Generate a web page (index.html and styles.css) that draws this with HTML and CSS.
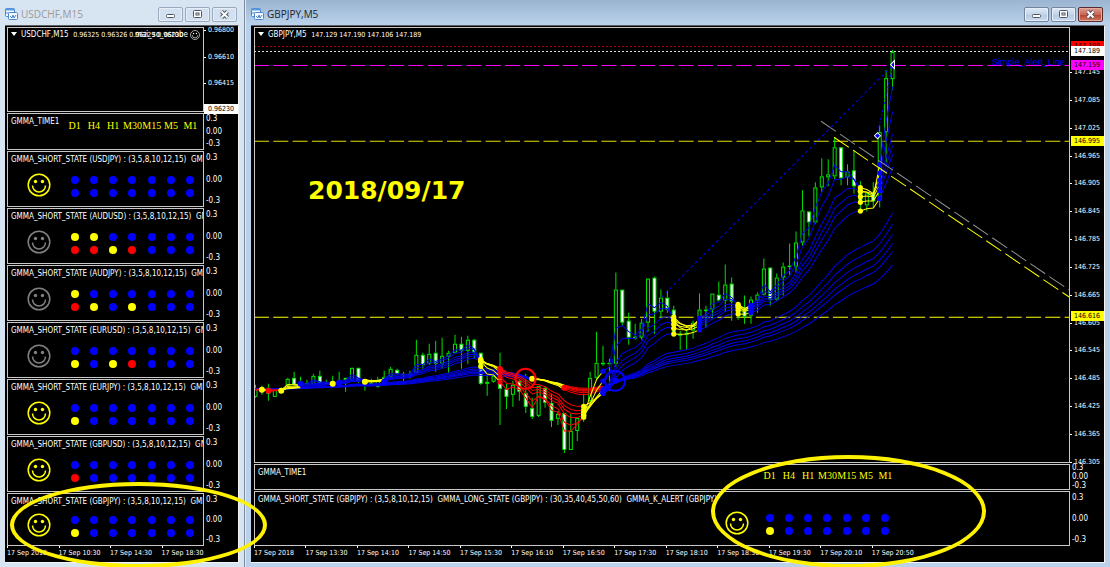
FILE: index.html
```html
<!DOCTYPE html>
<html lang="en">
<head>
    <meta charset="UTF-8">
    <meta name="viewport" content="width=device-width, initial-scale=1.0">
    <title>GBPJPY,M5</title>
    <link rel="stylesheet" href="styles.css">
</head>
<body>
    <svg class="defs" width="0" height="0">
        <symbol id="icon-chart" viewBox="0 0 13 12">
            <rect x="0.5" y="0.5" width="9" height="8" rx="1" fill="#f4f9ff" stroke="#4a86cf"/>
            <rect x="0.5" y="0.5" width="9" height="2" fill="#5b9be0"/>
            <path d="M2 6V4M4 7V4M6 6V4" stroke="#4a86cf"/>
            <rect x="3.5" y="4.5" width="9" height="7" rx="1" fill="#f4f9ff" stroke="#4a86cf"/>
            <path d="M5 8l2 2 1-3 1 3 2-3" fill="none" stroke="#4a86cf"/>
        </symbol>
        <symbol id="icon-min" viewBox="0 0 25 15">
            <rect x="8.5" y="7.5" width="8" height="3" rx="1" fill="#fff" stroke="#4d5562"/>
        </symbol>
        <symbol id="icon-max" viewBox="0 0 25 15">
            <rect x="8.5" y="3.5" width="8" height="7" rx="1" fill="#fff" stroke="#4d5562"/>
            <rect x="11" y="6" width="3" height="2" fill="#fff" stroke="#4d5562"/>
        </symbol>
        <symbol id="icon-close" viewBox="0 0 25 15">
            <path d="M9.5 4.5l6 6M15.5 4.5l-6 6" stroke="#4d5562" stroke-width="4"/>
            <path d="M9.5 4.5l6 6M15.5 4.5l-6 6" stroke="#fff" stroke-width="2"/>
        </symbol>
        <symbol id="icon-smile" viewBox="0 0 24 24">
            <circle cx="12" cy="12" r="10.8" fill="none" stroke="currentColor" stroke-width="1.5"/>
            <circle cx="8.5" cy="8.5" r="1.7" fill="currentColor"/>
            <circle cx="15.5" cy="8.5" r="1.7" fill="currentColor"/>
            <path d="M5.5 12.5a6.5 6.5 0 0 0 13 0" fill="none" stroke="currentColor" stroke-width="1.5"/>
        </symbol>
    </svg>

    <main class="desktop">
        <section class="window window-left">
            <header class="titlebar">
                <svg class="app-icon"><use href="#icon-chart"/></svg>
                <h1>USDCHF,M15</h1>
                <button type="button" aria-label="Minimize"><svg><use href="#icon-min"/></svg></button>
                <button type="button" aria-label="Maximize"><svg><use href="#icon-max"/></svg></button>
                <button type="button" aria-label="Close"><svg><use href="#icon-close"/></svg></button>
            </header>
            <div class="client">
                <div class="row row-price">
                    <div class="plot">
                        <p class="caption"><i class="arrow"></i>USDCHF,M15  <span class="quote">0.96325 0.96326 0.96229 0.96230</span></p>
                        <p class="expert">mai_so_osrobe <svg><use href="#icon-smile"/></svg></p>
                    </div>
                    <div class="axis prices">
                        <span>0.96800</span><span>0.96610</span><span>0.96415</span><span class="tag">0.96230</span>
                    </div>
                </div>
                <div class="row row-time">
                    <div class="plot">
                        <p class="caption">GMMA_TIME1</p>
                        <div class="frames"><span>D1</span><span>H4</span><span>H1</span><span>M30</span><span>M15</span><span>M5</span><span>M1</span></div>
                    </div>
                    <div class="axis"><span>0.3</span><span>0.00</span><span>-0.3</span></div>
                </div>
                <div class="states" id="states"></div>
                <div class="times"><span>17 Sep 2018</span><span>17 Sep 10:30</span><span>17 Sep 14:30</span><span>17 Sep 18:30</span></div>
            </div>
        </section>

        <section class="window window-right">
            <header class="titlebar">
                <svg class="app-icon"><use href="#icon-chart"/></svg>
                <h1>GBPJPY,M5</h1>
                <button type="button" aria-label="Minimize"><svg><use href="#icon-min"/></svg></button>
                <button type="button" aria-label="Maximize"><svg><use href="#icon-max"/></svg></button>
                <button type="button" class="close" aria-label="Close"><svg><use href="#icon-close"/></svg></button>
            </header>
            <div class="client">
                <div class="row row-chart">
                    <div class="plot">
                        <svg class="chart" id="chart" viewBox="254 27 816 435" preserveAspectRatio="none"></svg>
                        <p class="caption"><i class="arrow"></i>GBPJPY,M5  <span class="quote">147.129 147.190 147.106 147.189</span></p>
                        <p class="alert-line">Simple_Alert_Line</p>
                        <p class="date">2018/09/17</p>
                    </div>
                    <div class="axis prices">
                        <span>147.145</span><span>147.085</span><span>147.025</span><span>146.965</span><span>146.905</span><span>146.845</span><span>146.785</span><span>146.725</span><span>146.665</span><span>146.605</span><span>146.545</span><span>146.485</span><span>146.425</span><span>146.365</span><span>146.305</span>
                        <b class="mark mark-ask">147.199</b>
                        <b class="mark mark-alert">147.159</b>
                        <b class="mark mark-bid">147.189</b>
                        <b class="mark mark-high">146.995</b>
                        <b class="mark mark-low">146.616</b>
                    </div>
                </div>
                <div class="row row-time">
                    <div class="plot">
                        <p class="caption">GMMA_TIME1</p>
                        <div class="frames"><span>D1</span><span>H4</span><span>H1</span><span>M30</span><span>M15</span><span>M5</span><span>M1</span></div>
                    </div>
                    <div class="axis"><span>0.3</span><span>0.00</span><span>-0.3</span></div>
                </div>
                <div class="states" id="stateMain"></div>
                <div class="times"><span>17 Sep 2018</span><span>17 Sep 13:30</span><span>17 Sep 14:10</span><span>17 Sep 14:50</span><span>17 Sep 15:30</span><span>17 Sep 16:10</span><span>17 Sep 16:50</span><span>17 Sep 17:30</span><span>17 Sep 18:10</span><span>17 Sep 18:50</span><span>17 Sep 19:30</span><span>17 Sep 20:10</span><span>17 Sep 20:50</span></div>
            </div>
            <div class="ring ring-right"></div>
        </section>
        <div class="ring ring-left"></div>
    </main>
    <script src="chart.js"></script>
</body>
</html>
```
FILE: styles.css
```css
* {
    box-sizing: border-box;
}
body {
    margin: 0;
    background: #b9d1ea;
    color: #fff;
    font-family: "DejaVu Sans Condensed", "DejaVu Sans", sans-serif;
    font-size: 8px;
    line-height: 12px;
}
h1, p {
    margin: 0;
    font-weight: normal;
}
.defs {
    position: absolute;
}
.desktop {
    position: relative;
    display: flex;
    min-height: 100vh;
    overflow: hidden;
}
.window {
    display: flex;
    flex-direction: column;
    padding: 0 5px 5px;
}
.window-left {
    width: 245px;
    flex: none;
    background: #d7e4f2;
    border-right: 1px solid #7d8a9a;
}
.window-right {
    position: relative;
    flex: 1;
    min-width: 0;
    background: linear-gradient(#9ab4d1, #b9d1ea 24px);
    border-left: 1px solid #dfeaf6;
}

/* title bar */
.titlebar {
    display: flex;
    align-items: center;
    gap: 2px;
    height: 25px;
    padding: 3px 2px 0 0;
}
.titlebar h1 {
    flex: 1;
    margin-left: 1px;
    color: #20242c;
    font-family: "Open Sans", sans-serif;
    font-size: 10px;
}
.window-left .titlebar h1 {
    color: #9a9a9a;
}
.app-icon {
    width: 13px;
    height: 12px;
}
.titlebar button {
    width: 25px;
    height: 15px;
    padding: 0;
    border: 1px solid #72839b;
    border-radius: 2px;
    background: linear-gradient(#dfe9f5, #c3d4e8 50%, #b4c8df 51%, #cbdcee);
    box-shadow: inset 0 0 0 1px #e6eff9;
}
.window-left .titlebar button {
    border-color: #9aa9bd;
    background: #d3e0ef;
}
.titlebar button.close {
    border-color: #5b2a2c;
    background: linear-gradient(#dc9c90, #ca6753 50%, #b4402a 51%, #cf7a63);
    box-shadow: inset 0 0 0 1px #e2aca2;
}
.titlebar button svg {
    display: block;
    width: 25px;
    height: 15px;
    margin: -1px;
}

/* chart client area */
.client {
    flex: 1;
    display: flex;
    flex-direction: column;
    gap: 1px;
    padding: 1px 0 0 2px;
    border-top: 1px solid #5d6166;
    border-right: 1px solid #f4f4f4;
    border-bottom: 1px solid #f4f4f4;
    background: #000;
}
.window-right .client {
    padding-left: 3px;
}
.row {
    display: flex;
}
.plot {
    position: relative;
    flex: 1;
    min-width: 0;
    border: 1px solid #c8c8c8;
    overflow: hidden;
}
.axis {
    position: relative;
    width: 34px;
    display: flex;
    flex-direction: column;
    justify-content: space-between;
    padding-left: 2px;
}
.states .axis {
    padding-top: 1px;
}
.axis.prices {
    padding-left: 0;
}
.axis.prices, .times, .quote {
    font-size: 7px;
}
.axis.prices span {
    padding-left: 4px;
}
.axis.prices span::before {
    content: "";
    display: block;
    width: 2px;
    height: 1px;
    margin: 0 0 -1px -4px;
    background: #fff;
    transform: translateY(6px);
}
.window-left .axis.prices {
    margin: -3px 0 -2px;
}
.axis.prices .tag {
    height: 10px;
    line-height: 10px;
    background: #fff;
    color: #000;
}
.caption {
    padding: 2px 3px 1px;
    white-space: pre;
}
.row-price .caption, .row-chart .caption {
    padding-top: 1px;
}
.arrow {
    display: inline-block;
    margin: 0 4px 1px 0;
    border: 3px solid transparent;
    border-top: 4px solid #fff;
    border-bottom: 0;
}
.row-price {
    height: 85px;
}
.window-left .row-time {
    height: 37px;
}
.expert {
    position: absolute;
    top: 1px;
    right: 3px;
    display: flex;
    align-items: center;
    gap: 2px;
}
.expert svg {
    width: 10px;
    height: 10px;
}

/* time frame labels and state lamps */
.frames, .lamps {
    display: grid;
    grid-template-columns: repeat(7, 1fr);
    width: 135px;
    justify-items: center;
}
.frames {
    margin: -9px 0 0 57px;
    color: #ff0;
    font-family: "Liberation Serif", serif;
    font-size: 10px;
}
.states {
    display: flex;
    flex-direction: column;
    gap: 1px;
}
.states .row {
    height: 56px;
}
.states .row:last-child {
    height: 53px;
}
.state {
    display: flex;
    align-items: center;
    gap: 14px;
    padding: 5px 0 0 19px;
}
.row:last-child .state {
    padding-top: 3px;
}
.state svg {
    width: 24px;
    height: 24px;
    color: #ff0;
}
.state.off svg {
    color: #808080;
}
.lamps {
    row-gap: 5px;
    margin-top: 4px;
}
.lamps i {
    width: 8px;
    height: 8px;
    border-radius: 50%;
    background: #00f;
}
.lamps .y {
    background: #ff0;
}
.lamps .r {
    background: #f00;
}
.times {
    display: flex;
    height: 15px;
    padding-right: 25px;
    white-space: nowrap;
}
.window-right .times {
    padding-right: 181px;
}
.times span {
    flex: 1;
    width: 0;
}
.times span::before {
    content: "";
    display: block;
    width: 1px;
    height: 2px;
    margin: -1px 0;
    background: #fff;
}

/* main chart */
.row-chart {
    flex: 1;
    min-height: 435px;
}
.chart {
    position: absolute;
    top: -1px;
    left: -1px;
    width: calc(100% + 2px);
    height: calc(100% + 2px);
}
.row-chart .caption {
    position: relative;
}
.alert-line {
    position: absolute;
    top: 28px;
    right: 4px;
    color: #00f;
    font-family: "Liberation Sans", sans-serif;
    font-size: 9px;
}
.date {
    position: absolute;
    top: 149px;
    left: 53px;
    color: #ff0;
    font-family: "DejaVu Sans", sans-serif;
    font-size: 25px;
    font-weight: bold;
    line-height: 28px;
}
.row-chart .axis {
    padding-top: 39px;
    margin-bottom: -5px;
}
.mark {
    position: absolute;
    left: 1px;
    right: 0;
    padding-left: 3px;
    height: 10px;
    line-height: 10px;
    color: #000;
    font-weight: normal;
}
.mark-ask {
    top: 14px;
    background: #f00;
}
.mark-bid {
    top: 19px;
    background: #fff;
}
.mark-alert {
    top: 33px;
    background: #f0f;
}
.mark-high {
    top: 109px;
    background: #ff0;
}
.mark-low {
    top: 284px;
    background: #ff0;
}
.window-right .row-time {
    height: 26px;
}
.window-right .row-time .axis {
    line-height: 8px;
}
.window-right .frames {
    margin: -10px 174px 0 auto;
}
.window-right .states .row {
    height: 55px;
}
.window-right .state {
    justify-content: flex-end;
    gap: 11px;
    padding-right: 174px;
}

/* hand drawn highlights */
.ring {
    position: absolute;
    border: 4px solid #fff200;
    border-radius: 50%;
}
.ring-left {
    left: 10px;
    bottom: 0;
    width: 257px;
    height: 86px;
}
.ring-right {
    right: 124px;
    bottom: 0;
    width: 275px;
    height: 113px;
}
```
FILE: chart.js
```js
// lamp colours per pair: b = blue, y = yellow, r = red
const pairs = [
    { name: 'USDJPY', on: true, top: 'bbbbbbb', bottom: 'bbbbbbb' },
    { name: 'AUDUSD', on: false, top: 'yybbbbb', bottom: 'rryrbbb' },
    { name: 'AUDJPY', on: false, top: 'ybbbbbb', bottom: 'rybybbb' },
    { name: 'EURUSD', on: false, top: 'bbbbbbb', bottom: 'ybyrbbb' },
    { name: 'EURJPY', on: true, top: 'bbbbbbb', bottom: 'ybbbbbb' },
    { name: 'GBPUSD', on: true, top: 'bbbbbbb', bottom: 'rbbbbbb' },
    { name: 'GBPJPY', on: true, top: 'bbbbbbb', bottom: 'ybbbbbb' }
];

function stateRow(p) {
    const lamps = (p.top + p.bottom).split('').map(c => `<i class="${c}"></i>`).join('');
    return `<div class="row">
        <div class="plot">
            <p class="caption">GMMA_SHORT_STATE (${p.name}) : (3,5,8,10,12,15)  GMMA_LONG_STATE (${p.name}) : (30,35,40,45,50,60)  GMMA_K_ALERT (${p.name})</p>
            <div class="state ${p.on ? '' : 'off'}"><svg><use href="#icon-smile"/></svg><div class="lamps">${lamps}</div></div>
        </div>
        <div class="axis"><span>0.3</span><span>0.00</span><span>-0.3</span></div>
    </div>`;
}

document.getElementById('states').innerHTML = pairs.map(stateRow).join('');
document.getElementById('stateMain').innerHTML = stateRow(pairs[6]);

// candles: high, body top, body bottom, low, 1 = falling
const candles = [
    [384,388,396,397,0],[385,388,391,394,0],[383,387,393,400,1],[388,389,396,396,0],[387,389,391,392,0],
    [377,378,385,386,0],[371,377,384,385,1],[376,383,384,385,0],[379,382,383,384,0],[373,375,383,384,0],
    [370,375,383,384,1],[379,382,383,384,0],[375,381,383,387,0],[371,379,381,382,0],[377,377,379,391,1],
    [367,367,379,380,0],[367,367,381,382,1],[379,381,382,390,1],[378,382,383,385,0],[376,379,386,387,0],
    [370,376,379,383,0],[366,368,376,377,0],[368,369,373,374,1],[371,373,374,380,1],[370,373,374,378,0],
    [339,354,372,373,0],[352,354,364,368,1],[343,353,363,364,0],[340,352,363,371,1],[337,355,363,368,0],
    [350,352,356,372,0],[334,343,352,353,0],[336,343,350,368,1],[335,339,350,363,0],[338,339,352,358,1],
    [352,352,383,384,1],[375,381,383,395,0],[374,375,381,382,0],[352,367,388,424,1],[383,388,396,408,1],
    [380,384,394,406,0],[379,380,391,400,1],[373,392,406,412,1],[397,407,416,418,1],[385,385,415,416,0],
    [386,387,402,407,1],[393,402,420,426,1],[410,413,418,424,0],[412,412,449,452,1],[413,430,449,449,0],
    [417,417,430,440,0],[393,405,418,421,0],[371,377,400,402,0],[331,362,377,378,0],[345,362,363,365,0],
    [358,362,363,390,0],[272,289,363,366,0],[289,289,322,325,1],[312,320,337,344,1],[323,336,338,339,1],
    [318,322,337,339,0],[278,278,322,331,0],[276,277,311,333,1],[289,297,311,317,0],[290,297,309,312,1],
    [305,309,333,334,1],[330,333,335,349,1],[329,332,334,349,0],[320,322,330,338,0],[293,309,320,330,0],
    [305,309,310,327,0],[293,293,309,318,0],[281,294,300,301,1],[264,284,300,311,0],[277,283,301,320,1],
    [301,302,313,319,1],[295,310,316,323,1],[296,299,315,323,0],[292,294,300,312,0],[258,268,294,295,0],
    [267,267,299,305,1],[273,277,299,300,0],[262,266,277,295,0],[243,265,266,275,0],[231,242,266,272,0],
    [190,210,242,245,0],[211,211,222,236,1],[182,187,222,223,0],[158,176,187,192,0],[159,174,177,186,0],
    [137,147,176,179,0],[147,147,178,185,1],[164,171,177,185,0],[150,170,186,193,1],[181,187,203,210,1],
    [192,193,205,211,0],[182,193,201,207,1],[125,132,200,207,0],[70,78,132,162,0],[50,52,79,90,0]
];
const x = i => 255.5 + i * 6.435;
const out = [];
const line = (x1, y1, x2, y2, color, dash) =>
    out.push(`<line x1="${x1}" y1="${y1}" x2="${x2}" y2="${y2}" stroke="${color}" stroke-dasharray="${dash || 'none'}"/>`);
const dot = (cx, cy, color, r) => out.push(`<circle cx="${cx}" cy="${cy}" r="${r || 2.6}" fill="${color}"/>`);

// horizontal levels
line(254, 46.5, 1070, 46.5, '#b00000', '2 2');
line(254, 51.5, 1070, 51.5, '#e0e0e0', '2 2');
line(254, 65.5, 1070, 65.5, '#f0f', '15 4.3');
line(254, 141, 1070, 141, '#e0e000', '15 4.3');
line(254, 316.5, 1070, 316.5, '#ff0', '15 4.3');

candles.forEach((c, i) => {
    const [hi, top, bottom, lo, down] = c;
    line(x(i), hi, x(i), top, '#00e000');
    line(x(i), bottom, x(i), lo, '#00e000');
    out.push(`<rect x="${x(i) - 1.5}" y="${top + 0.5}" width="3" height="${Math.max(bottom - top - 1, 0.5)}" fill="${down ? '#fff' : '#000'}" stroke="#00e800"/>`);
});

// moving averages
function ema(period, start) {
    const k = 2 / (period + 1);
    let v = start;
    return candles.map(c => {
        v += k * ((c[4] ? c[2] : c[1]) - v);
        return v;
    });
}
function drawRuns(values, runs) {
    runs.forEach(([from, to, color]) => {
        const pts = values.slice(from, to + 1).map((v, n) => `${x(from + n).toFixed(1)},${v.toFixed(1)}`);
        out.push(`<polyline points="${pts.join(' ')}" fill="none" stroke="${color}"/>`);
    });
}
const blue = '#0000e8';
const shortRuns = [[0,1,'#f00'],[1,2,'#ff0'],[2,4,'#f00'],[4,7,'#ff0'],[7,17,blue],[17,20,'#ff0'],[20,35,blue],
    [35,38,'#ff0'],[38,51,'#f00'],[51,54,'#ff0'],[54,65,blue],[65,69,'#ff0'],[69,75,blue],[75,77,'#ff0'],
    [77,94,blue],[94,97,'#ff0'],[97,99,blue]];
const longRuns = [[0,43,blue],[43,48,'#ff0'],[48,54,'#f00'],[54,99,blue]];
const longs = [30, 35, 40, 45, 50, 60].map(p => ema(p, 388));
const shorts = [3, 5, 8, 10, 12, 15].map(p => ema(p, 389));
longs.forEach(v => drawRuns(v, longRuns));
shorts.forEach(v => drawRuns(v, shortRuns));

// state changes
[[35,'#ff0'],[38,'#f00'],[51,'#ff0'],[54,'#00f'],[65,'#ff0'],[69,'#00f'],[75,'#ff0'],[77,'#00f'],[94,'#ff0'],[97,'#00f']]
    .forEach(([i, color]) => shorts.forEach(v => dot(x(i), v[i], color)));
[[1,389,'#ff0'],[2,390,'#f00'],[4,390,'#ff0'],[7,383,'#00f'],[12,383,'#ff0'],[13,382,'#00f'],[17,381,'#ff0'],[20,381,'#00f'],
    [43,378,'#ff0'],[48,387,'#f00'],[56,380,'#00f']].forEach(([i, y, color]) => dot(x(i), y, color, 3));
out.push('<circle cx="525.5" cy="378" r="10" fill="none" stroke="#f00" stroke-width="2"/>');
out.push('<circle cx="615" cy="380" r="10" fill="none" stroke="#00f" stroke-width="2"/>');

// trend lines and orders
line(821, 121, 1070, 290, '#909090', '18 5');
line(834, 137, 1070, 297, '#ff0', '18 5');
line(661, 297, 893, 65, '#00f', '3 3');
line(877, 135, 893, 65, '#00f', '2 2');
out.push('<path d="M890.5 64.5l4-4v8z" fill="#00f" stroke="#fff"/>');
out.push('<path d="M880.5 135.5l-3-3-3 3 3 3z" fill="#00f" stroke="#fff"/>');

document.getElementById('chart').innerHTML = out.join('');
```
